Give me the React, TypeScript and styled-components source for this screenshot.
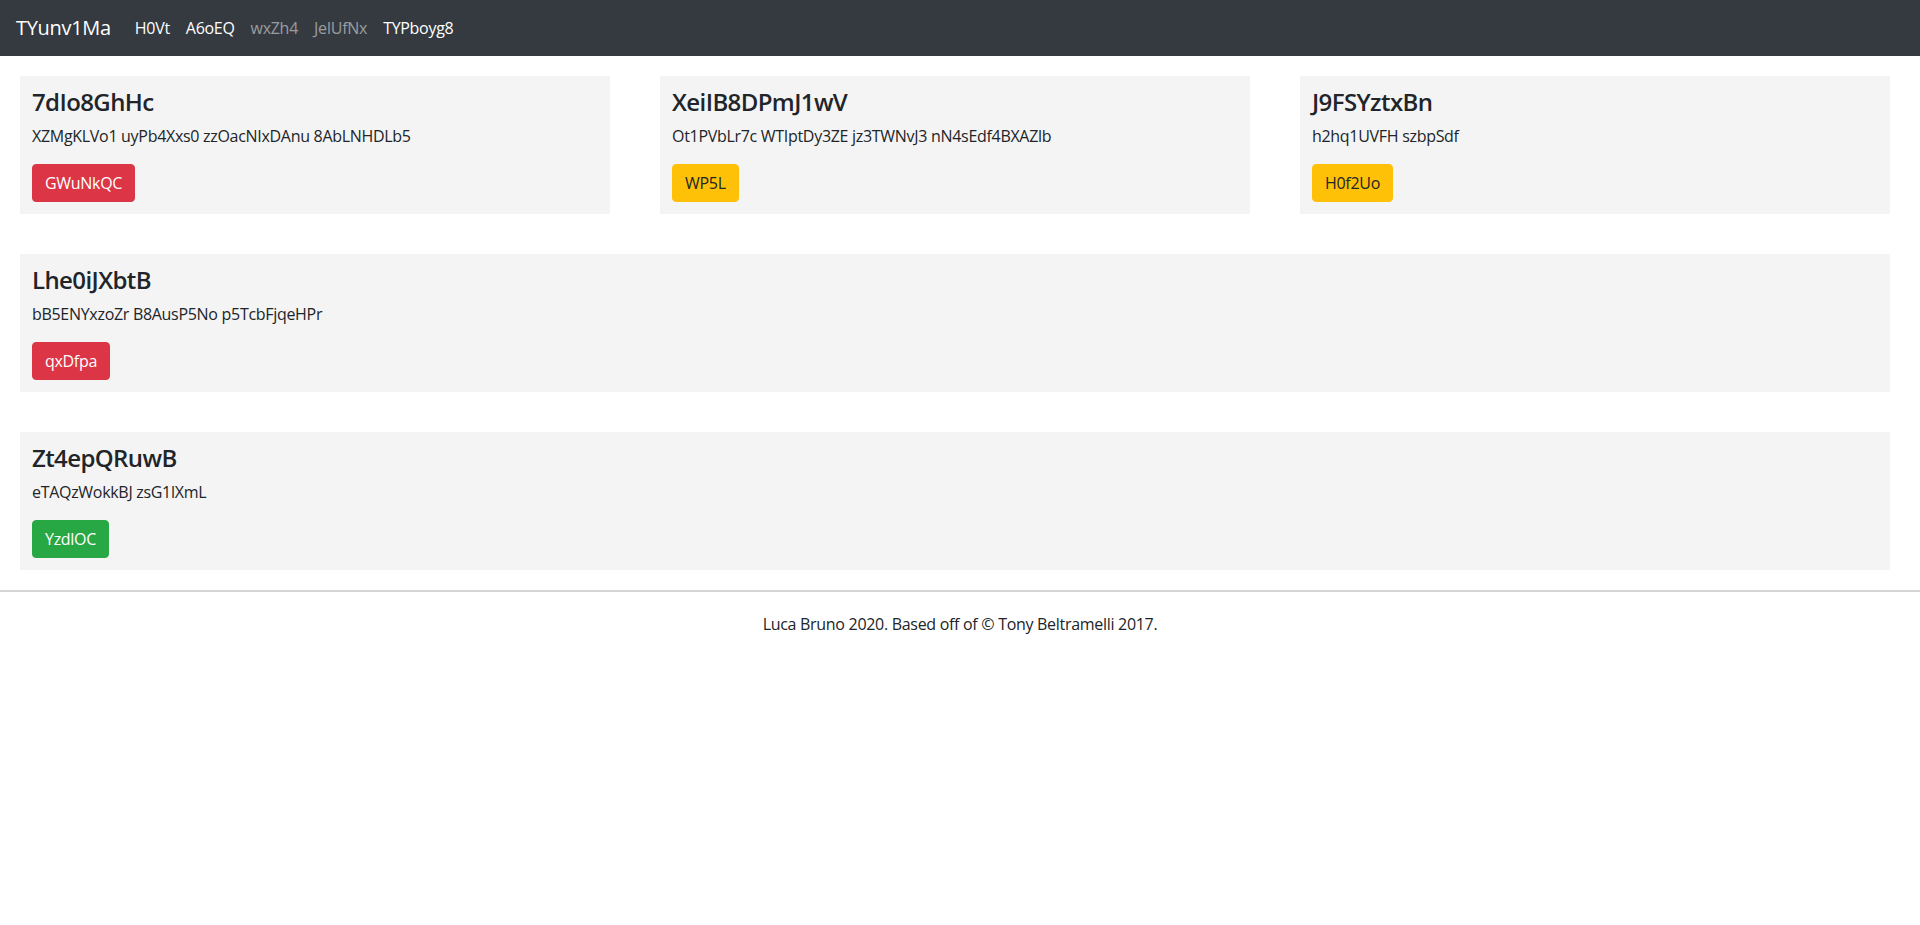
import React from "react";
import styled, { createGlobalStyle } from "styled-components";

type Tone = "danger" | "warning" | "success";

interface CardData {
  title: string;
  text: string;
  button: string;
  tone: Tone;
}

const navLinks = [
  { label: "H0Vt", active: true },
  { label: "A6oEQ", active: true },
  { label: "wxZh4", active: false },
  { label: "JeIUfNx", active: false },
  { label: "TYPboyg8", active: true },
];

const rows: CardData[][] = [
  [
    { title: "7dIo8GhHc", text: "XZMgKLVo1 uyPb4Xxs0 zzOacNIxDAnu 8AbLNHDLb5", button: "GWuNkQC", tone: "danger" },
    { title: "XeiIB8DPmJ1wV", text: "Ot1PVbLr7c WTIptDy3ZE jz3TWNvJ3 nN4sEdf4BXAZlb", button: "WP5L", tone: "warning" },
    { title: "J9FSYztxBn", text: "h2hq1UVFH szbpSdf", button: "H0f2Uo", tone: "warning" },
  ],
  [{ title: "Lhe0iJXbtB", text: "bB5ENYxzoZr B8AusP5No p5TcbFjqeHPr", button: "qxDfpa", tone: "danger" }],
  [{ title: "Zt4epQRuwB", text: "eTAQzWokkBJ zsG1lXmL", button: "YzdlOC", tone: "success" }],
];

const toneColors: Record<Tone, { bg: string; fg: string }> = {
  danger: { bg: "#dc3545", fg: "#ffffff" },
  warning: { bg: "#ffc107", fg: "#212529" },
  success: { bg: "#28a745", fg: "#ffffff" },
};

export default function App() {
  return (
    <>
      <GlobalStyle />
      <Navbar>
        <Brand>TYunv1Ma</Brand>
        <NavList>
          {navLinks.map((link) => (
            <NavLink key={link.label} $active={link.active}>
              {link.label}
            </NavLink>
          ))}
        </NavList>
      </Navbar>
      <Main>
        {rows.map((row, i) => (
          <Row key={i} $cols={row.length}>
            {row.map((card) => (
              <Col key={card.title}>
                <Card>
                  <CardTitle>{card.title}</CardTitle>
                  <CardText>{card.text}</CardText>
                  <Button $tone={card.tone}>{card.button}</Button>
                </Card>
              </Col>
            ))}
          </Row>
        ))}
      </Main>
      <Footer>
        <Rule />
        <FooterText>Luca Bruno 2020. Based off of © Tony Beltramelli 2017.</FooterText>
      </Footer>
    </>
  );
}

const GlobalStyle = createGlobalStyle`
  html, body {
    margin: 0;
    padding: 0;
    background: #ffffff;
  }
  body {
    font-family: "Open Sans", "Noto Sans", Arial, sans-serif;
    font-size: 16px;
    line-height: 1.5;
    letter-spacing: -0.3px;
    color: #212529;
  }
  * {
    box-sizing: border-box;
  }
`;

const Navbar = styled.nav`
  display: flex;
  align-items: center;
  height: 56px;
  padding: 8px 16px;
  background-color: #343a40;
`;

const Brand = styled.a`
  font-size: 20px;
  line-height: 30px;
  padding: 5px 0;
  margin-right: 16px;
  color: #ffffff;
  white-space: nowrap;
`;

const NavList = styled.ul`
  display: flex;
  list-style: none;
  margin: 0;
  padding: 0;
`;

const NavLink = styled.li<{ $active: boolean }>`
  padding: 8px;
  font-size: 16px;
  line-height: 24px;
  color: ${(p) => (p.$active ? "#ffffff" : "rgba(255, 255, 255, 0.5)")};
`;

const Main = styled.main`
  padding: 20px 0;
  display: flex;
  flex-direction: column;
  gap: 40px;
`;

const Row = styled.div<{ $cols: number }>`
  display: grid;
  grid-template-columns: repeat(${(p) => p.$cols}, 1fr);
`;

const Col = styled.div`
  padding: 0 30px 0 20px;
`;

const Card = styled.div`
  background: #f4f4f4;
  padding: 12px;
`;

const CardTitle = styled.h4`
  margin: 0 0 8px;
  font-size: 24px;
  font-weight: 600;
  letter-spacing: -0.6px;
  line-height: 28px;
`;

const CardText = styled.p`
  margin: 0 0 16px;
  font-size: 16px;
  line-height: 24px;
`;

const Button = styled.button<{ $tone: Tone }>`
  display: inline-block;
  padding: 6px 12px;
  font-family: inherit;
  font-size: 16px;
  line-height: 24px;
  letter-spacing: inherit;
  border: 1px solid ${(p) => toneColors[p.$tone].bg};
  border-radius: 4px;
  background: ${(p) => toneColors[p.$tone].bg};
  color: ${(p) => toneColors[p.$tone].fg};
  cursor: pointer;
`;

const Footer = styled.footer`
  text-align: center;
`;

const Rule = styled.hr`
  margin: 0 0 20px;
  border: 0;
  border-top: 2px solid #d4d4d4;
`;

const FooterText = styled.p`
  margin: 0;
  font-size: 16px;
  line-height: 24px;
`;
